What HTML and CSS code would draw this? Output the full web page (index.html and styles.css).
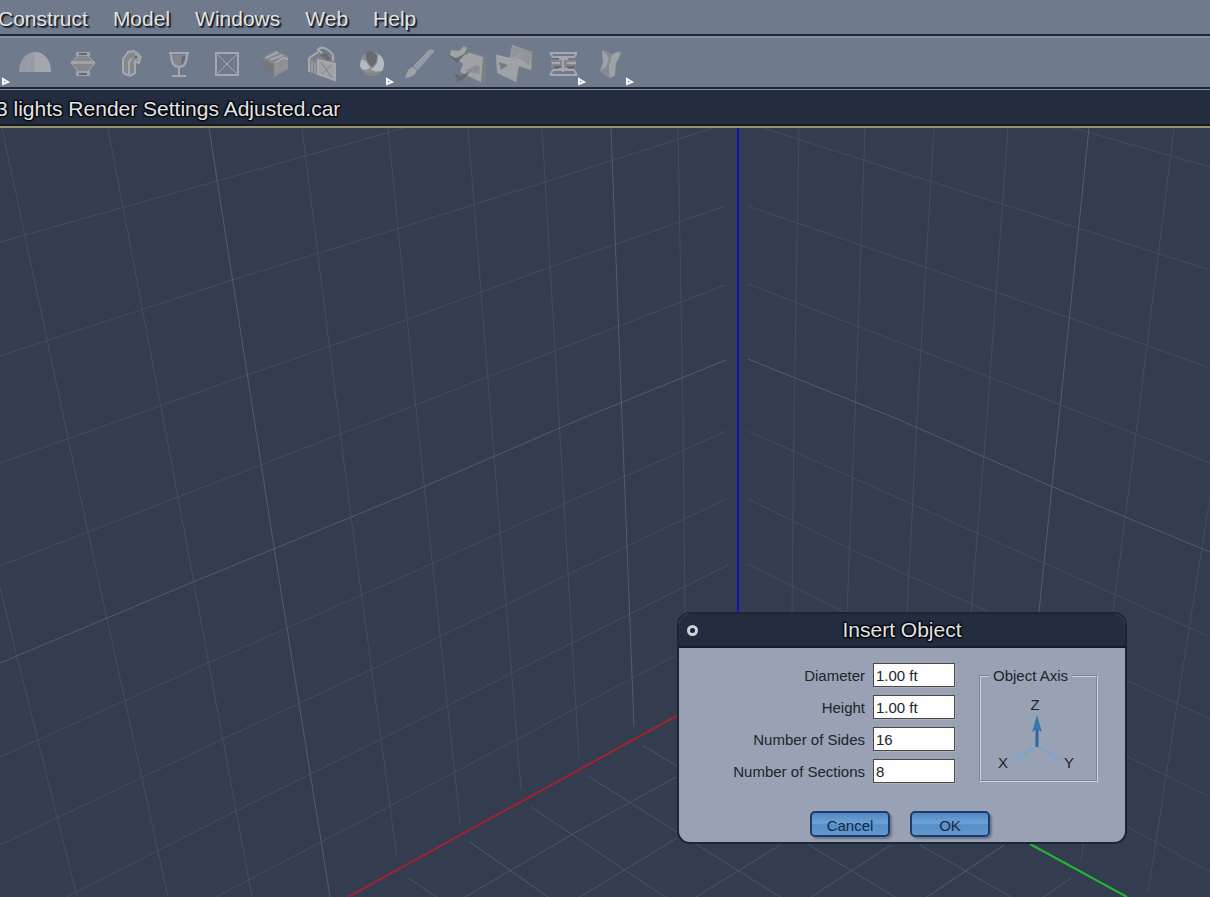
FILE: index.html
```
<!DOCTYPE html>
<html lang="en">
<head>
  <meta charset="UTF-8">
  <meta name="viewport" content="width=device-width,initial-scale=1">
  <title>3 lights Render Settings Adjusted.car</title>
  <link rel="stylesheet" href="styles.css">
</head>
<body>
  <nav class="menubar">
    <a href="#construct">Construct</a>
    <a href="#model">Model</a>
    <a href="#windows">Windows</a>
    <a href="#web">Web</a>
    <a href="#help">Help</a>
  </nav>

  <div class="toolbar" role="toolbar" aria-label="Insert">
    <button type="button" class="tool tool-first" aria-label="Primitives">
      <svg viewBox="0 0 48 48"><path class="more" d="M40 41v5l5-2z"/></svg>
    </button>
    <button type="button" class="tool" aria-label="Vertex object">
      <svg viewBox="0 0 48 48">
        <path fill="#969ba4" d="M8 34C8 22 15 14 24 14s16 8 16 20z"/>
        <path fill="#a3a7ae" d="M24 14c9 0 16 8 16 20H24z"/>
        <path class="line" d="M24 14v20M24 14c-5 4-7 11-7 20M24 14c5 4 7 11 7 20" opacity=".6"/>
      </svg>
    </button>
    <button type="button" class="tool" aria-label="Spline object">
      <svg viewBox="0 0 48 48">
        <path class="clay" d="M18 18h12l6 7-6 8H18l-6-8z"/>
        <path class="light" d="M17 14h14v4H17zM17 33h14v5H17zM12 23h24v3H12z"/>
        <path class="line" d="M19 18l-7 7 7 8M29 18l7 7-7 8"/>
        <path class="dark" d="M20 15h8v2h-8zM20 35h8v2h-8z"/>
      </svg>
    </button>
    <button type="button" class="tool" aria-label="Text">
      <svg viewBox="0 0 48 48">
        <path class="clay" d="M16 35V21l5-7 8-1 5 5-1 7-5-2v12l-5 3z"/>
        <path class="line" stroke-width="2" d="M16 35V21l5-7 7-1M16 35l7 3 5-3V23l4 2 2-7M22 37V24l3-4"/>
        <path class="light" d="M27 13l4 1 3 4-1 6-4-3z"/>
        <circle class="dark" cx="29" cy="19" r="1.5"/>
      </svg>
    </button>
    <button type="button" class="tool" aria-label="Goblet">
      <svg viewBox="0 0 48 48">
        <path class="clay" d="M16 17h16c0 8-3 12-8 12s-8-4-8-12z"/>
        <path class="line" stroke-width="2" d="M14 15h20M16 16c0 9 3 13 8 13s8-4 8-13M24 29v8M17 38h14"/>
        <path class="dark" d="M27 18h3c0 5-1 7-4 9z"/>
      </svg>
    </button>
    <button type="button" class="tool" aria-label="Formula">
      <svg viewBox="0 0 48 48">
        <path class="line" stroke-width="2" d="M13 15h22v22H13z"/>
        <path class="line" d="M15 17l18 18M33 17L15 35"/>
      </svg>
    </button>
    <button type="button" class="tool" aria-label="Metaball">
      <svg viewBox="0 0 48 48">
        <path class="clay" d="M11 20l13-8 13 6v3l-14 8z"/>
        <path fill="#77787e" d="M11 20l12 7v12l-10-6z"/>
        <path fill="#8f9096" d="M23 27l14-7v11l-14 8z"/>
        <path class="line" stroke-width="2" d="M15 20l12-6M19 22l13-5M24 25l8-5 5 1"/>
      </svg>
    </button>
    <button type="button" class="tool" aria-label="Volumetric">
      <svg viewBox="0 0 48 48">
        <path fill="#7e8086" d="M10 19l11-7 16 8-1 22-11-4-15-5z"/>
        <path class="light" d="M19 22l17 4v17l-17-7z"/>
        <path class="clay" d="M11 20l7 4v13l-7-3z"/>
        <path class="line" stroke-width="2" d="M10 34V20l9-6M19 37V22l17 4v16l-17-6"/>
        <path class="line" d="M13 23v12M16 25v11"/>
        <path class="line" stroke-width="2" d="M19 11c5-3 11 0 15 6v6M22 9l-3 3 4 3"/>
        <path class="dark" d="M21 17l6-2 5 6-3 2z"/>
        <path stroke="#7f8187" d="M22 24l11 16M32 27l-9 9"/>
      </svg>
    </button>
    <button type="button" class="tool" aria-label="Ocean">
      <svg viewBox="0 0 48 48">
        <circle cx="25" cy="26" r="12" fill="#8f8e90"/>
        <path fill="#b3bac2" d="M31 16c6 4 8 10 4 17-3 1-8 1-11-2 6-3 8-9 7-15zM14 22c4-1 7 4 9 8-5 3-9 2-10-2z"/>
        <path class="dark" d="M19 15c5-3 9-1 11 3 0 5-2 9-5 11-4-4-7-8-6-14z"/>
        <path fill="#83817f" opacity=".7" d="M15 33c7 3 14 2 21-1-5 7-15 8-21 1z"/>
        <path class="more" d="M40 41v5l5-2z"/>
      </svg>
    </button>
    <button type="button" class="tool" aria-label="Paint">
      <svg viewBox="0 0 48 48">
        <path fill="#969aa1" d="M34 12q5-2 5 2L23 32l-5-3z"/>
        <path class="light" d="M17 29l5 3c-2 6-6 7-12 8 2-4 2-9 7-11z"/>
        <path class="line" d="M19 28L35 12"/>
      </svg>
    </button>
    <button type="button" class="tool" aria-label="Terrain">
      <svg viewBox="0 0 48 48">
        <path fill="#7b7e84" d="M23 12l21 6-2 28-4-1-16-7z"/>
        <path class="light" d="M20 13l20 6-2 25-21-10 3-8-5-4z"/>
        <path fill="#77797f" d="M10 13l9-7 7 2-1 8-6 2-5 6-9-8z"/>
        <path class="light" d="M8 12l8 1 5-5 3 2-3 6-8 4-6-3z"/>
        <path class="dark" d="M5 17l8 4 9-5-8 9zM11 35l7 3 9-5-5 7-8 5-1-5z"/>
        <path fill="#7d8087" opacity=".6" d="M22 32c6 0 9-7 15-4l-1 8c-6-2-9 0-14-4z"/>
      </svg>
    </button>
    <button type="button" class="tool" aria-label="Plant">
      <svg viewBox="0 0 48 48">
        <path fill="#787b82" d="M7 18l14-1V6l23 7-2 21-12-3-3 14L8 36z"/>
        <path class="light" d="M5 17l14 3 2-13 20 7-1 18-12-4-3 16L6 35z"/>
        <path fill="#92949a" d="M21 8l20 6-3 14-10-8-8 2z"/>
        <path class="dark" d="M8 24l9 3-7 5z" opacity=".7"/>
        <path class="line" d="M5 17l14 4 5-1 8-5M24 27l7-4 9 8"/>
      </svg>
    </button>
    <button type="button" class="tool" aria-label="Replicator">
      <svg viewBox="0 0 48 48">
        <path class="clay" d="M12 22h25v8H12z"/>
        <path class="line" stroke-width="2" d="M11 15h27M11 15l3 4h21l3-4M11 37h27M11 37l3-5h21l3 5M13 25h8M28 25h9M24 18v16M20 21h9M20 31h9"/>
        <path class="dark" d="M15 28h7v2h-7zM28 28h8v2h-8zM14 20h6v1h-6z"/>
        <path class="more" d="M40 41v5l5-2z"/>
      </svg>
    </button>
    <button type="button" class="tool" aria-label="Bones">
      <svg viewBox="0 0 48 48">
        <path fill="#868a92" d="M15 12l6 2 4 2 9-3-3 9-4 5 1 11-6 2-9-6 3-9z"/>
        <path class="light" d="M15 12l4 4 3 4-3 9-6 4 3-9zM25 17l5-3 4 1-5 10-1 12-5 3-1-12z"/>
        <path class="line" opacity=".5" d="M27 17l-4 11v11"/>
        <path class="more" d="M40 41v5l5-2z"/>
      </svg>
    </button>
  </div>

  <header class="doc-title">
    <h1>3 lights Render Settings Adjusted.car</h1>
  </header>

  <main class="viewport">
    <svg class="scene" viewBox="0 128 1210 769" preserveAspectRatio="xMinYMin slice" aria-hidden="true">
      <!-- left wall -->
      <g class="grid">
        <path d="M0 587L17 657L77 897M2 128L88 532L168 897M108 128L178 497L252 897M302 128L351 517L397 858M388 128L417 418L460 823M468 128L491 418L521 790M542 128L559 418L579 760M678 128L683 418L685 612"/>
        <path d="M0 242L217 181L404 128M0 356L232 280L400 228L545 182L713 128M0 463L247 375L400 322L550 267L725 206M0 566L178 497L400 411L557 350L725 285M0 757L208 663L400 578L726 431M0 845L223 739L400 656L567 575L726 499M66 897L236 811L381 739L572 643L728 565M216 897L388 807L516 740L676 655"/>
      </g>
      <path class="grid-major" d="M209 128L274 547L330 897M611 128L622 418L634 727M0 663L193 582L400 497L583 418L726 360"/>
      <!-- right wall -->
      <g class="grid">
        <path d="M799 128L794 418L792 612M865 128L855 418L847 612M934 128L917 418L907 612M1008 128L987 418L971 612M1174 128L1138 418L1113 612L1081 862M1210 497L1177 705L1148 893"/>
        <path d="M1073 128L1210 167M763 128L932 182L1078 228L1210 270M748 206L927 268L1070 318L1210 368M748 284L989 377L1210 463M748 431L977 533L1210 637M748 499L848 548L987 611L1128 681L1210 719M748 564L842 611L1128 757L1210 797M1128 827L1210 872"/>
      </g>
      <path class="grid-major" d="M1089 128L1059 418L1039 612M748 359L895 418L1053 487L1210 552"/>
      <!-- floor -->
      <path class="grid-floor" d="M407 877L436 897M531 807L665 897M588 776L780 897M642 745L809 845L895 897M920 845L1011 897M465 897L571 835L676 777M580 897L677 838M696 897L780 845M811 897L891 845M1044 897L1071 878"/>
      <path class="grid-major" d="M470 842L548 897M927 897L1004 845"/>
      <path class="axis-x" d="M348 897L680 714"/>
      <path class="axis-y" d="M1030 844L1127 897"/>
      <path class="axis-z" d="M738 128V614"/>
    </svg>

    <form class="dialog" aria-labelledby="dialog-title">
      <div class="dialog-head">
        <button type="button" class="close" aria-label="Close"></button>
        <h2 id="dialog-title">Insert Object</h2>
      </div>
      <div class="dialog-body">
        <div class="fields">
          <label for="diameter">Diameter</label>
          <input type="text" id="diameter" value="1.00 ft">
          <label for="height">Height</label>
          <input type="text" id="height" value="1.00 ft">
          <label for="sides">Number of Sides</label>
          <input type="text" id="sides" value="16">
          <label for="sections">Number of Sections</label>
          <input type="text" id="sections" value="8">
        </div>
        <fieldset class="axis-box">
          <legend>Object Axis</legend>
          <svg viewBox="0 0 114 94" width="114" height="94">
            <path d="M56 63L33 75M56 63L80 75" stroke="#7fa3c6" stroke-width="2"/>
            <path fill="#7fa6cc" d="M32 76l9-7 5 4zM81 76l-9-7-5 4z"/>
            <path d="M56 63V38" stroke="#2f679f" stroke-width="3"/>
            <path fill="#3a76ae" d="M56 31l5 17-5-3-5 3z"/>
            <text x="54" y="26">Z</text>
            <text x="22" y="84">X</text>
            <text x="88" y="84">Y</text>
          </svg>
        </fieldset>
      </div>
      <div class="dialog-foot">
        <button type="button">Cancel</button>
        <button type="submit">OK</button>
      </div>
    </form>
  </main>
</body>
</html>
```
FILE: styles.css
```
:root {
  --bar: #6f7a8c;
  --bar-light: #8390a2;
  --navy: #232d3f;
  --line-dark: #1c2536;
  --scene: #333d4f;
  --panel: #98a2b4;
  --text: #20242c;
}
* { box-sizing: border-box; }
body {
  margin: 0;
  height: 100vh;
  display: flex;
  flex-direction: column;
  overflow: hidden;
  background: var(--scene);
  font-family: "Liberation Sans", Arial, sans-serif;
  font-size: 15px;
  color: var(--text);
}

.menubar {
  display: flex;
  gap: 25px;
  height: 36px;
  margin-left: -2px;
  background: var(--bar);
  border-bottom: 2px solid var(--line-dark);
}
.menubar a {
  font-size: 21px;
  line-height: 37px;
  color: #e2e4e8;
  text-decoration: none;
  text-shadow: 1px 1px 1px #10151e, 2px 2px 1px #2b3340;
}

.toolbar {
  display: flex;
  height: 54px;
  background: var(--bar);
  border-top: 2px solid var(--bar-light);
  border-bottom: 1px solid var(--bar-light);
  box-shadow: inset 0 -2px 0 var(--line-dark);
}
.tool {
  flex: none;
  width: 48px;
  height: 48px;
  padding: 0;
  border: 0;
  background: none;
}
.tool-first { margin-left: -37px; }
.tool svg { display: block; fill: none; }
.tool .light { fill: #9fa2a7; }
.tool .clay { fill: #87868b; }
.tool .dark { fill: #696a70; }
.tool .line { stroke: #a4a9b1; }
.tool .more { fill: #6f7a8c; stroke: #f6f8fb; stroke-width: 2; }

.doc-title {
  height: 38px;
  background: var(--navy);
  border-bottom: 2px solid #93936f;
  box-shadow: inset 0 -2px 0 #171b20;
}
.doc-title h1 {
  margin: 0 0 0 -4px;
  font-size: 21px;
  font-weight: 400;
  line-height: 37px;
  white-space: nowrap;
}
.doc-title h1, .dialog h2 {
  color: #e2e4e6;
  text-shadow: 1px 1px 1px #05070b, -1px -1px 1px #05070b, 1px -1px 1px #05070b, -1px 1px 1px #05070b, 0 0 3px #05070b;
}

.viewport {
  position: relative;
  flex: 1;
  min-height: 0;
}
.scene {
  display: block;
  width: 100%;
  height: 100%;
  fill: none;
}
.grid { stroke: #434d60; }
.grid-floor { stroke: #4a5568; }
.grid-major { stroke: #525d71; }
.axis-x { stroke: #a22331; stroke-width: 2; }
.axis-y { stroke: #21b636; stroke-width: 2; }
.axis-z { stroke: #1012bc; stroke-width: 2; }

.dialog {
  position: absolute;
  left: 677px;
  top: 484px;
  width: 450px;
  margin: 0;
  border: 2px solid var(--line-dark);
  border-radius: 13px;
  background: var(--panel);
  overflow: hidden;
}
.dialog-head {
  display: grid;
  grid-template-columns: 24px 1fr 24px;
  align-items: center;
  height: 34px;
  background: var(--navy);
  border-bottom: 2px solid #141c2a;
}
.close {
  justify-self: end;
  width: 11px;
  height: 11px;
  margin-right: 5px;
  padding: 0;
  border: 3px solid #cdd2da;
  border-radius: 50%;
  background: #1a2230;
}
.dialog h2 {
  margin: 0;
  font-size: 21px;
  font-weight: 400;
  line-height: 32px;
  text-align: center;
}
.dialog-body {
  display: flex;
  justify-content: flex-end;
  gap: 24px;
  padding: 15px 27px 0 0;
}
.fields {
  display: grid;
  grid-template-columns: auto 82px;
  grid-auto-rows: 24px;
  gap: 8px;
  align-items: center;
}
.fields label { text-align: right; }
.fields input {
  width: 100%;
  height: 24px;
  padding: 1px 2px 0;
  border: 1px solid #4b4743;
  border-radius: 0;
  background: #fdfdfd;
  box-shadow: 1px 1px 0 #a9b2c1;
  color: var(--text);
  font: inherit;
}
.axis-box {
  width: 119px;
  height: 115px;
  margin: 4px 0 0;
  padding: 0;
  border: 2px groove #c9d2e2;
}
.axis-box legend {
  margin-left: 8px;
  padding: 0 4px;
  line-height: 17px;
}
.axis-box svg { display: block; }
.axis-box text {
  fill: var(--text);
  font-size: 15px;
  text-anchor: middle;
}
.dialog-foot {
  display: flex;
  justify-content: center;
  gap: 20px;
  padding: 28px 4px 5px 0;
}
.dialog-foot button {
  width: 80px;
  height: 26px;
  padding: 2px 0 0;
  border: 2px solid #1d3c69;
  border-radius: 5px;
  background: linear-gradient(#5389c1, #6ba1d6 45%, #578ec6 55%, #6199d0);
  box-shadow: 2px 2px 2px #6d7687;
  color: #162a45;
  font: inherit;
}
```
